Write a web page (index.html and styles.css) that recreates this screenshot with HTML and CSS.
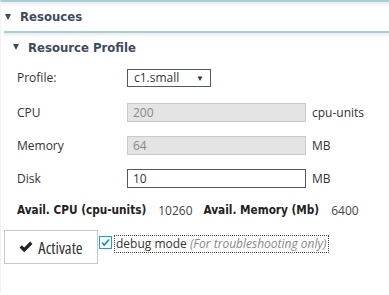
FILE: index.html
```html
<!DOCTYPE html>
<html>
<head>
<meta charset="utf-8">
<link rel="stylesheet" href="styles.css">
</head>
<body>
<div class="panel">
  <div class="hdr hdr-main"><span class="caret"></span>Resouces</div>
  <div class="section">
    <div class="hdr hdr-sub"><span class="caret"></span>Resource Profile</div>
    <div class="form">
      <div class="row row-first">
        <label class="lbl">Profile:</label>
        <div class="select"><span>c1.small</span><span class="sel-arrow">▼</span></div>
      </div>
      <div class="row">
        <label class="lbl">CPU</label>
        <div class="input disabled">200</div>
        <span class="unit">cpu-units</span>
      </div>
      <div class="row">
        <label class="lbl">Memory</label>
        <div class="input disabled">64</div>
        <span class="unit">MB</span>
      </div>
      <div class="row">
        <label class="lbl">Disk</label>
        <div class="input">10</div>
        <span class="unit">MB</span>
      </div>
      <div class="avail">
        <b>Avail. CPU (cpu-units)</b><span class="num">10260</span>
        <b>Avail. Memory (Mb)</b><span class="num">6400</span>
      </div>
    </div>
  </div>
  <div class="actions">
    <button class="btn"><svg class="chk" viewBox="0 0 14 12" width="14" height="12"><path d="M0.5 6.5 L2.8 4.2 L5.2 6.6 L11.2 0.6 L13.5 2.9 L5.2 11.2 Z" fill="#222"/></svg><span class="btn-text">Activate</span></button>
    <span class="cb"><svg viewBox="0 0 13 13" width="13" height="13"><rect x="0.5" y="0.5" width="12" height="12" fill="#fff" stroke="#1aa0dc"/><path d="M3 6.5 L5.3 9 L10 3.5" fill="none" stroke="#1a84c4" stroke-width="1.6"/></svg></span>
    <span class="cb-label">debug mode <i>(For troubleshooting only)</i></span>
  </div>
</div>
</body>
</html>
```
FILE: styles.css
```css
html, body { margin: 0; padding: 0; background: #fff; }
body { width: 389px; height: 295px; overflow: hidden; font-family: "Open Sans", sans-serif; font-size: 12px; font-stretch: 90%; color: #333; }
.panel { border-top: 2px solid #a6cfd8; border-left: 1px solid #f2f2f2; height: 293px; box-sizing: border-box; position: relative; }
.panel::before { content: ""; position: absolute; left: 0; right: 0; top: 0; height: 5px; background: linear-gradient(#ececec, #fff); }
.hdr { position: relative; font-family: "DejaVu Sans Condensed", "DejaVu Sans", sans-serif; font-weight: bold; font-size: 13px; color: #3e4b5e; display: flex; align-items: center; }
.hdr-main { height: 29px; padding-left: 4px; }
.caret { width: 0; height: 0; border-left: 3.5px solid transparent; border-right: 3.5px solid transparent; border-top: 6px solid #3e4b5e; margin-right: 9px; }
.section { margin-left: 3px; border-top: 2px solid #a6cfd8; position: relative; }
.section::before { content: ""; position: absolute; left: 0; right: 0; top: 0; height: 5px; background: linear-gradient(#ececec, #fff); }
.hdr-sub { height: 28px; padding-left: 9px; }
.form { padding-left: 13px; }
.row { display: flex; align-items: center; height: 33px; white-space: nowrap; }
.row-first { margin-bottom: 2px; }
.lbl { width: 110px; }
.select { height: 16px; border: 1px solid #4f5b5b; display: flex; align-items: center; justify-content: space-between; padding: 0 6px; width: 70px; }
.sel-arrow { font-size: 8px; color: #333; }
.input { width: 172px; height: 17px; border: 1px solid #4f5b5b; padding-left: 5px; display: flex; align-items: center; color: #333; }
.input.disabled { background: #e4e4e4; border-color: #c9c9c9; color: #888; }
.unit { margin-left: 6px; }
.avail { display: flex; align-items: center; height: 30px; white-space: nowrap; }
.avail b { font-family: "DejaVu Sans Condensed", "DejaVu Sans", sans-serif; font-size: 11.7px; color: #222; }
.avail .num { margin: 0 11px 0 12px; color: #444; font-size: 12px; }
.actions { display: flex; align-items: flex-start; padding-left: 3px; margin-top: 5px; }
.btn { width: 94px; height: 34px; border: 1px solid #c8c8c8; background: #fff; font-family: "Open Sans", sans-serif; font-size: 16.5px; font-stretch: 87.5%; color: #333; display: flex; align-items: center; justify-content: center; gap: 5px; padding: 0; }
.cb { margin: 6px 0 0 1px; display: flex; }
.cb-label { margin: 6px 0 0 3px; outline: 1px dotted #444; padding: 0 1px; font-size: 12px; color: #333; line-height: 16px; white-space: nowrap; }
.cb-label i { color: #888; }
```
